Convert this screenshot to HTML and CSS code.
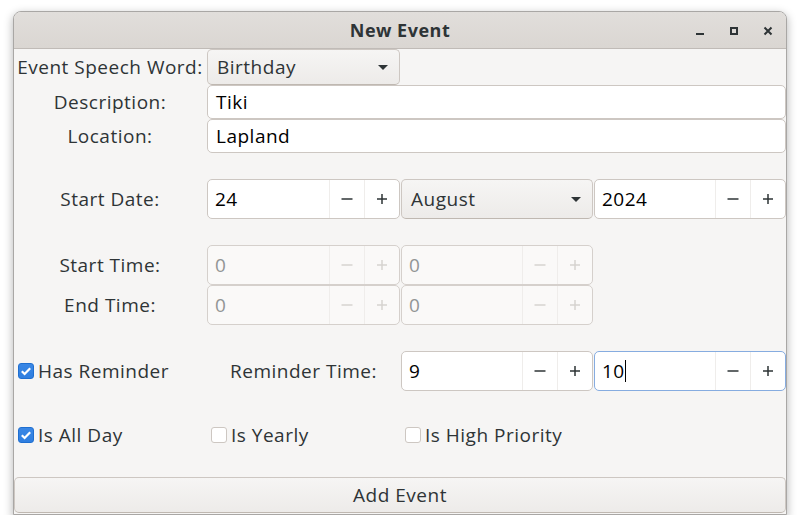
FILE: index.html
```html
<!DOCTYPE html>
<html>
<head>
<meta charset="utf-8">
<title>New Event</title>
<link rel="stylesheet" href="styles.css">
</head>
<body>
<div class="window">
  <header class="titlebar">
    <span class="title">New Event</span>
    <div class="controls">
      <span class="ctl"><svg width="16" height="16" viewBox="0 0 16 16"><rect x="4" y="10" width="8" height="2" fill="#2e3436"/></svg></span>
      <span class="ctl"><svg width="16" height="16" viewBox="0 0 16 16"><rect x="5" y="5" width="6" height="6" fill="none" stroke="#2e3436" stroke-width="2"/></svg></span>
      <span class="ctl"><svg width="16" height="16" viewBox="0 0 16 16"><path d="M4.5 4.5 L11.5 11.5 M11.5 4.5 L4.5 11.5" stroke="#2e3436" stroke-width="2"/></svg></span>
    </div>
  </header>
  <main class="content">
    <div class="grid">
      <div class="label">Event Speech Word:</div>
      <div class="combo"><span>Birthday</span><i class="arrow"></i></div>
      <div></div><div></div>

      <div class="label">Description:</div>
      <div class="entry span3">Tiki</div>

      <div class="label">Location:</div>
      <div class="entry span3">Lapland</div>

      <div class="spacer"></div>

      <div class="label">Start Date:</div>
      <div class="spin"><span class="val">24</span><span class="sb"><svg width="12" height="12" viewBox="0 0 12 12"><path d="M0.5 6 H11.5" stroke="#2e3436" stroke-width="1.5"/></svg></span><span class="sb"><svg width="12" height="12" viewBox="0 0 12 12"><path d="M1 6 H11 M6 1 V11" stroke="#2e3436" stroke-width="1.5"/></svg></span></div>
      <div class="combo"><span>August</span><i class="arrow"></i></div>
      <div class="spin"><span class="val">2024</span><span class="sb"><svg width="12" height="12" viewBox="0 0 12 12"><path d="M0.5 6 H11.5" stroke="#2e3436" stroke-width="1.5"/></svg></span><span class="sb"><svg width="12" height="12" viewBox="0 0 12 12"><path d="M1 6 H11 M6 1 V11" stroke="#2e3436" stroke-width="1.5"/></svg></span></div>

      <div class="spacer"></div>

      <div class="label">Start Time:</div>
      <div class="spin disabled"><span class="val">0</span><span class="sb"><svg width="12" height="12" viewBox="0 0 12 12"><path d="M0.5 6 H11.5" stroke="#d6d3d0" stroke-width="1.5"/></svg></span><span class="sb"><svg width="12" height="12" viewBox="0 0 12 12"><path d="M1 6 H11 M6 1 V11" stroke="#d6d3d0" stroke-width="1.5"/></svg></span></div>
      <div class="spin disabled"><span class="val">0</span><span class="sb"><svg width="12" height="12" viewBox="0 0 12 12"><path d="M0.5 6 H11.5" stroke="#d6d3d0" stroke-width="1.5"/></svg></span><span class="sb"><svg width="12" height="12" viewBox="0 0 12 12"><path d="M1 6 H11 M6 1 V11" stroke="#d6d3d0" stroke-width="1.5"/></svg></span></div>
      <div></div>

      <div class="label">End Time:</div>
      <div class="spin disabled"><span class="val">0</span><span class="sb"><svg width="12" height="12" viewBox="0 0 12 12"><path d="M0.5 6 H11.5" stroke="#d6d3d0" stroke-width="1.5"/></svg></span><span class="sb"><svg width="12" height="12" viewBox="0 0 12 12"><path d="M1 6 H11 M6 1 V11" stroke="#d6d3d0" stroke-width="1.5"/></svg></span></div>
      <div class="spin disabled"><span class="val">0</span><span class="sb"><svg width="12" height="12" viewBox="0 0 12 12"><path d="M0.5 6 H11.5" stroke="#d6d3d0" stroke-width="1.5"/></svg></span><span class="sb"><svg width="12" height="12" viewBox="0 0 12 12"><path d="M1 6 H11 M6 1 V11" stroke="#d6d3d0" stroke-width="1.5"/></svg></span></div>
      <div></div>

      <div class="spacer"></div>

      <label class="check"><span class="box on"><svg width="16" height="16" viewBox="0 0 16 16"><path d="M3.8 8.3 L6.6 11 L12.2 5.2" fill="none" stroke="#fff" stroke-width="2.2"/></svg></span>Has Reminder</label>
      <div class="label">Reminder Time:</div>
      <div class="spin"><span class="val">9</span><span class="sb"><svg width="12" height="12" viewBox="0 0 12 12"><path d="M0.5 6 H11.5" stroke="#2e3436" stroke-width="1.5"/></svg></span><span class="sb"><svg width="12" height="12" viewBox="0 0 12 12"><path d="M1 6 H11 M6 1 V11" stroke="#2e3436" stroke-width="1.5"/></svg></span></div>
      <div class="spin focus"><span class="val">10<span class="caret"></span></span><span class="sb"><svg width="12" height="12" viewBox="0 0 12 12"><path d="M0.5 6 H11.5" stroke="#2e3436" stroke-width="1.5"/></svg></span><span class="sb"><svg width="12" height="12" viewBox="0 0 12 12"><path d="M1 6 H11 M6 1 V11" stroke="#2e3436" stroke-width="1.5"/></svg></span></div>

      <div class="spacer"></div>

      <label class="check"><span class="box on"><svg width="16" height="16" viewBox="0 0 16 16"><path d="M3.8 8.3 L6.6 11 L12.2 5.2" fill="none" stroke="#fff" stroke-width="2.2"/></svg></span>Is All Day</label>
      <label class="check"><span class="box"></span>Is Yearly</label>
      <label class="check"><span class="box"></span>Is High Priority</label>
      <div></div>
    </div>
    <button class="add">Add Event</button>
  </main>
</div>
</body>
</html>
```
FILE: styles.css
```css
* { box-sizing: border-box; }
html, body { margin: 0; padding: 0; background: #ffffff; }
body {
  font-family: "Open Sans", "Noto Sans", sans-serif;
  font-size: 19px;
  letter-spacing: 0.5px;
  color: #2e3436;
}
.window {
  margin: 11px 0 0 13px;
  width: 774px;
  height: 504px;
  border: 1px solid #a9a7a5;
  border-radius: 8px 8px 0 0;
  background: #f6f5f4;
  box-shadow: 0 3px 9px 1px rgba(0,0,0,0.25);
  display: flex;
  flex-direction: column;
}
.titlebar {
  position: relative;
  height: 37px;
  flex: none;
  border-bottom: 1px solid #c0bbb7;
  background: linear-gradient(#e1dedb, #dad6d2);
  border-radius: 7px 7px 0 0;
  display: flex;
  align-items: center;
  justify-content: center;
}
.title { font-weight: 700; font-size: 18px; margin-top: -1px; }
.controls {
  position: absolute;
  right: 2px;
  top: 2px;
  display: flex;
  gap: 1px;
}
.ctl {
  width: 33px;
  height: 33px;
  display: flex;
  align-items: center;
  justify-content: center;
}
.content { flex: 1; display: flex; flex-direction: column; }
.grid {
  display: grid;
  grid-template-columns: 192px 193px 192px 192px;
  column-gap: 1px;
  grid-template-rows: 36px 34px 34px 26px 40px 26px 40px 40px 26px 40px 26px 36px;
}
.label {
  display: flex;
  align-items: center;
  justify-content: center;
  white-space: nowrap;
}
.spacer { grid-column: 1 / -1; }
.span3 { grid-column: 2 / 5; }
.entry {
  border: 1px solid #cdc7c2;
  border-radius: 5px;
  background: #ffffff;
  display: flex;
  align-items: center;
  padding: 0 8px;
  color: #000;
}
.combo {
  border: 1px solid #cdc7c2;
  border-bottom-color: #bfb8b1;
  border-radius: 5px;
  background: linear-gradient(#f6f5f4, #edebe9);
  display: flex;
  align-items: center;
  justify-content: space-between;
  padding: 0 11px 0 9px;
}
.arrow {
  width: 0; height: 0;
  border-left: 5px solid transparent;
  border-right: 5px solid transparent;
  border-top: 5px solid #2e3436;
}
.spin {
  border: 1px solid #cdc7c2;
  border-radius: 5px;
  background: #ffffff;
  display: flex;
  align-items: stretch;
  color: #000;
}
.spin .val {
  flex: 1;
  display: flex;
  align-items: center;
  padding-left: 7px;
}
.sb {
  width: 35px;
  display: flex;
  align-items: center;
  justify-content: center;
  border-left: 1px solid #efedeb;
}
.spin.disabled {
  background: #faf9f8;
  border-color: #d5d0cc;
  color: #929595;
}
.spin.focus { border-color: #86ace0; }
.caret {
  display: inline-block;
  width: 1px;
  height: 22px;
  background: #000;
  margin-left: 0;
}
.check {
  display: flex;
  align-items: center;
  padding-left: 4px;
  white-space: nowrap;
}
.box {
  width: 16px;
  height: 16px;
  border: 1px solid #cdc7c2;
  border-radius: 3px;
  background: #ffffff;
  margin-right: 4px;
  display: flex;
  align-items: center;
  justify-content: center;
}
.box.on {
  background: linear-gradient(#3a87e5, #2f7fe0);
  border-color: #1f6fd0;
}
.box svg { margin: -1px; }
.add {
  margin-top: 24px;
  height: 36px;
  font: inherit;
  letter-spacing: inherit;
  color: #2e3436;
  border: 1px solid #cdc7c2;
  border-bottom-color: #bfb8b1;
  border-radius: 5px;
  background: linear-gradient(#f6f5f4, #edebe9);
}
```
